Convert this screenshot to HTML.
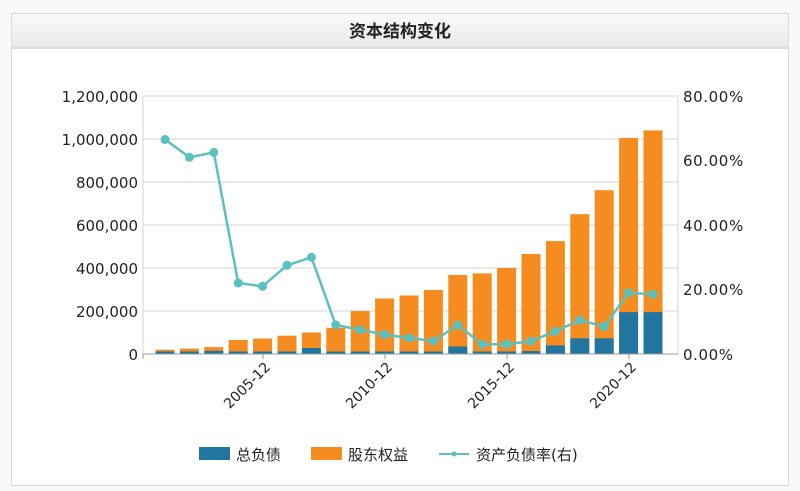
<!DOCTYPE html>
<html><head><meta charset="utf-8"><style>
body{margin:0;width:800px;height:491px;background:#f7f9fb;overflow:hidden;font-family:"Liberation Sans","Noto Sans CJK SC",sans-serif}
.box{position:absolute;left:11px;top:13px;width:776px;height:471px;background:#fff;border:1px solid #d8d8d8}
.hd{height:33px;border-bottom:2px solid #dcdcdc;background:linear-gradient(#fafafa,#e9e9e9);text-align:center;font-size:17px;font-weight:bold;line-height:36px;color:#222}
svg{position:absolute;left:0;top:0}
</style></head><body>
<div class="box"><div class="hd">资本结构变化</div></div>
<svg width="800" height="491" font-family="DejaVu Sans, Noto Sans CJK SC, sans-serif">
<g stroke="#d4d4d4" stroke-width="1">
<line x1="143" y1="96" x2="678" y2="96"/><line x1="143" y1="139" x2="678" y2="139"/><line x1="143" y1="182" x2="678" y2="182"/><line x1="143" y1="225" x2="678" y2="225"/><line x1="143" y1="268" x2="678" y2="268"/><line x1="143" y1="311" x2="678" y2="311"/>
<line x1="143" y1="96" x2="143" y2="354"/><line x1="678" y1="96" x2="678" y2="354"/>
</g>
<g fill="#f68b1f">
<rect x="155.5" y="349.7" width="19" height="4.3"/><rect x="179.9" y="348.6" width="19" height="5.4"/><rect x="204.3" y="347.1" width="19" height="6.9"/><rect x="228.7" y="340" width="19" height="14"/><rect x="253.1" y="338.5" width="19" height="15.5"/><rect x="277.5" y="335.7" width="19" height="18.3"/><rect x="301.9" y="332.5" width="19" height="21.5"/><rect x="326.3" y="327.8" width="19" height="26.2"/><rect x="350.7" y="311" width="19" height="43"/><rect x="375.1" y="298.5" width="19" height="55.5"/><rect x="399.5" y="295.5" width="19" height="58.5"/><rect x="423.9" y="290" width="19" height="64"/><rect x="448.3" y="274.9" width="19" height="79.1"/><rect x="472.7" y="273.4" width="19" height="80.6"/><rect x="497.1" y="268" width="19" height="86"/><rect x="521.5" y="254" width="19" height="100"/><rect x="545.9" y="241.1" width="19" height="112.9"/><rect x="570.3" y="214.2" width="19" height="139.8"/><rect x="594.7" y="190.2" width="19" height="163.8"/><rect x="619.1" y="138" width="19" height="216"/><rect x="643.5" y="130.4" width="19" height="223.6"/>
</g>
<g fill="#21759f">
<rect x="155.5" y="351.5" width="19" height="2.5"/><rect x="179.9" y="351.5" width="19" height="2.5"/><rect x="204.3" y="350.8" width="19" height="3.2"/><rect x="228.7" y="351.5" width="19" height="2.5"/><rect x="253.1" y="351.5" width="19" height="2.5"/><rect x="277.5" y="351.5" width="19" height="2.5"/><rect x="301.9" y="348" width="19" height="6"/><rect x="326.3" y="351.5" width="19" height="2.5"/><rect x="350.7" y="351.5" width="19" height="2.5"/><rect x="375.1" y="351.5" width="19" height="2.5"/><rect x="399.5" y="351.5" width="19" height="2.5"/><rect x="423.9" y="351.5" width="19" height="2.5"/><rect x="448.3" y="346.5" width="19" height="7.5"/><rect x="472.7" y="351.5" width="19" height="2.5"/><rect x="497.1" y="351.5" width="19" height="2.5"/><rect x="521.5" y="351" width="19" height="3"/><rect x="545.9" y="345.4" width="19" height="8.6"/><rect x="570.3" y="338.3" width="19" height="15.7"/><rect x="594.7" y="338.3" width="19" height="15.7"/><rect x="619.1" y="312.1" width="19" height="41.9"/><rect x="643.5" y="312.1" width="19" height="41.9"/>
</g>
<line x1="143" y1="354" x2="678" y2="354" stroke="#999"/>
<g stroke="#999"><line x1="143" y1="354" x2="143" y2="359"/><line x1="263" y1="354" x2="263" y2="359"/><line x1="385" y1="354" x2="385" y2="359"/><line x1="507" y1="354" x2="507" y2="359"/><line x1="629" y1="354" x2="629" y2="359"/></g>
<polyline fill="none" stroke="#5cc0bf" stroke-width="2.5" points="165,139.5 189.4,157.3 213.8,152.4 238.2,283 262.6,286.3 287,265.3 311.4,257.3 335.8,325 360.2,329.8 384.6,334.6 409,337.9 433.4,341.1 457.8,325 482.2,344.3 506.6,344.3 531,341.1 555.4,331.4 579.8,320.1 604.2,326.6 628.6,292.7 653,294.3"/>
<g fill="#5cc0bf">
<circle cx="165" cy="139.5" r="4.5"/><circle cx="189.4" cy="157.3" r="4.5"/><circle cx="213.8" cy="152.4" r="4.5"/><circle cx="238.2" cy="283" r="4.5"/><circle cx="262.6" cy="286.3" r="4.5"/><circle cx="287" cy="265.3" r="4.5"/><circle cx="311.4" cy="257.3" r="4.5"/><circle cx="335.8" cy="325" r="4.5"/><circle cx="360.2" cy="329.8" r="4.5"/><circle cx="384.6" cy="334.6" r="4.5"/><circle cx="409" cy="337.9" r="4.5"/><circle cx="433.4" cy="341.1" r="4.5"/><circle cx="457.8" cy="325" r="4.5"/><circle cx="482.2" cy="344.3" r="4.5"/><circle cx="506.6" cy="344.3" r="4.5"/><circle cx="531" cy="341.1" r="4.5"/><circle cx="555.4" cy="331.4" r="4.5"/><circle cx="579.8" cy="320.1" r="4.5"/><circle cx="604.2" cy="326.6" r="4.5"/><circle cx="628.6" cy="292.7" r="4.5"/><circle cx="653" cy="294.3" r="4.5"/>
</g>
<g font-size="15" fill="#222" text-anchor="end">
<text x="138" y="102">1,200,000</text><text x="138" y="145">1,000,000</text><text x="138" y="188">800,000</text><text x="138" y="231">600,000</text><text x="138" y="274">400,000</text><text x="138" y="317">200,000</text><text x="138" y="360">0</text>
</g>
<g font-size="15" fill="#222" letter-spacing="0.6">
<text x="683" y="102">80.00%</text><text x="683" y="166">60.00%</text><text x="683" y="231">40.00%</text><text x="683" y="295">20.00%</text><text x="683" y="360">0.00%</text>
</g>
<g font-size="14" fill="#222" text-anchor="end">
<text transform="translate(271,368) rotate(-45)">2005-12</text>
<text transform="translate(393,368) rotate(-45)">2010-12</text>
<text transform="translate(515,368) rotate(-45)">2015-12</text>
<text transform="translate(637,368) rotate(-45)">2020-12</text>
</g>
<rect x="199" y="447" width="31" height="13" fill="#21759f"/>
<rect x="311" y="447" width="31" height="13" fill="#f68b1f"/>
<line x1="439" y1="454" x2="469" y2="454" stroke="#5cc0bf" stroke-width="2"/><circle cx="454" cy="454" r="2.5" fill="#5cc0bf"/>
<g font-size="15" fill="#222"><text x="236" y="460">总负债</text><text x="348" y="460">股东权益</text><text x="476" y="460">资产负债率(右)</text></g>
</svg>
</body></html>
